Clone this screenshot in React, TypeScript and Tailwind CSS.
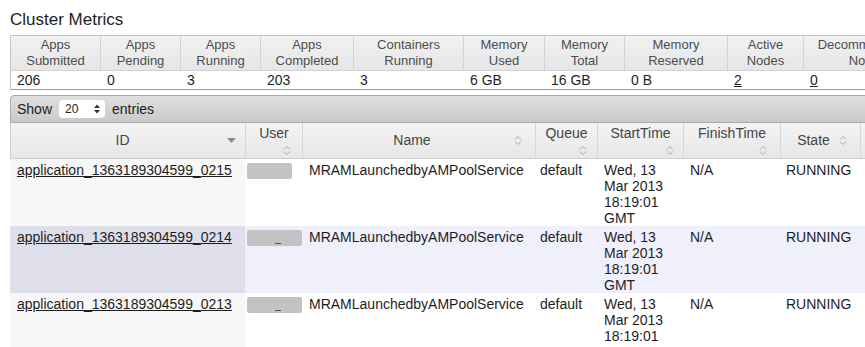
import type { ReactNode } from 'react';

const metricCols = [
  { w: 'w-[90px]', h: ['Apps', 'Submitted'], v: '206' },
  { w: 'w-[80px]', h: ['Apps', 'Pending'], v: '0' },
  { w: 'w-[80px]', h: ['Apps', 'Running'], v: '3' },
  { w: 'w-[93px]', h: ['Apps', 'Completed'], v: '203' },
  { w: 'w-[110px]', h: ['Containers', 'Running'], v: '3' },
  { w: 'w-[81px]', h: ['Memory', 'Used'], v: '6 GB' },
  { w: 'w-[80px]', h: ['Memory', 'Total'], v: '16 GB' },
  { w: 'w-[103px]', h: ['Memory', 'Reserved'], v: '0 B' },
  { w: 'w-[76px]', h: ['Active', 'Nodes'], v: '2', link: true },
  { w: 'w-[128px]', h: ['Decommissioned', 'Nodes'], v: '0', link: true },
  { w: 'w-[80px]', h: ['Lost', 'Nodes'], v: '0', link: true },
];

function SortIcon() {
  return (
    <svg width="8" height="11" viewBox="0 0 8 11" className="shrink-0">
      <path d="M1 4.5 L4 1.5 L7 4.5" fill="none" stroke="#a8a8a8" strokeWidth="1" />
      <path d="M1 6.5 L4 9.5 L7 6.5" fill="none" stroke="#a8a8a8" strokeWidth="1" />
    </svg>
  );
}

function SortedDesc() {
  return (
    <svg width="9" height="5" viewBox="0 0 9 5" className="shrink-0">
      <path d="M0 0 L9 0 L4.5 5 Z" fill="#8c8c8c" />
    </svg>
  );
}

// header with icon beside the label
function InlineHead({ label, icon, pr }: { label: string; icon: ReactNode; pr: string }) {
  return (
    <div className={`flex h-full items-center pl-[7px] ${pr}`}>
      <span className="flex-1 text-center">{label}</span>
      {icon}
    </div>
  );
}

// header where the icon wraps under the label
function StackHead({ label, pr }: { label: string; pr: string }) {
  return (
    <div className="flex h-full flex-col pt-[2px]">
      <span className="text-center leading-[17px]">{label}</span>
      <div className={`flex justify-end pt-[3px] ${pr}`}>
        <SortIcon />
      </div>
    </div>
  );
}

const appCols = [
  'w-[235px]',
  'w-[57px]',
  'w-[233px]',
  'w-[62px]',
  'w-[86px]',
  'w-[97px]',
  'w-[80px]',
  'w-[95px]',
  'w-[95px]',
];

const apps = ['0215', '0214', '0213'];

function Redacted({ wide, marks }: { wide: boolean; marks: boolean }) {
  return (
    <div className="relative mt-[4px] ml-[2px]">
      <div className={`h-[16px] ${wide ? 'w-[55px]' : 'w-[45px]'} rounded-[2px] bg-[#c3c3c3] blur-[0.6px]`} />
      {marks && (
        <div className="absolute left-[28px] top-[13px] h-[1px] w-[6px] bg-[#555]" />
      )}
    </div>
  );
}

export default function App() {
  return (
    <div className="h-[347px] w-[865px] overflow-hidden bg-white font-['Liberation_Sans',Arial,sans-serif] text-[#1e1e1e]">
      <h1 className="pl-[10px] pt-[10px] text-[17px] leading-[20px]">Cluster Metrics</h1>

      {/* Metrics table */}
      <div className="ml-[10px] mt-[5px] w-max border border-[#c4c4c4] border-b-[#9a9a9a]">
        <div className="flex border-b border-[#d2d2d2] bg-[linear-gradient(#f1f1f1,#e6e6e6)]">
          {metricCols.map((c) => (
            <div
              key={c.h.join(' ')}
              className={`${c.w} border-r border-[#d4d4d4] py-[1px] text-center text-[13px] leading-[16px] text-[#4d4d4d]`}
            >
              <div>{c.h[0]}</div>
              <div>{c.h[1]}</div>
            </div>
          ))}
        </div>
        <div className="flex">
          {metricCols.map((c) => (
            <div key={c.h.join(' ')} className={`${c.w} py-[1px] pl-[6px] text-[14px] leading-[16px]`}>
              {c.link ? <span className="underline">{c.v}</span> : c.v}
            </div>
          ))}
        </div>
      </div>

      {/* Applications table */}
      <div className="ml-[10px] mt-[5px] w-max">
        <div className="flex h-[28px] items-center rounded-t-[4px] border border-[#a9a9a9] bg-[linear-gradient(#e0e0e0,#c9c9c9)] pl-[6px] text-[14px]">
          <span>Show</span>
          <div className="ml-[7px] flex h-[18px] w-[46px] items-center justify-between rounded-[4px] bg-white pl-[6px] pr-[5px] text-[12px] text-[#222]">
            <span>20</span>
            <svg width="6" height="10" viewBox="0 0 6 10">
              <path d="M0 4 L3 0.5 L6 4 Z" fill="#333" />
              <path d="M0 6 L3 9.5 L6 6 Z" fill="#333" />
            </svg>
          </div>
          <span className="ml-[7px]">entries</span>
        </div>

        <div className="flex h-[36px] border-b border-l border-[#cfcfcf] bg-[linear-gradient(#f3f3f3,#e7e7e7)] text-[14px] text-[#444]">
          <div className={`${appCols[0]} border-r border-[#d6d6d6]`}>
            <InlineHead label="ID" icon={<SortedDesc />} pr="pr-[9px]" />
          </div>
          <div className={`${appCols[1]} border-r border-[#d6d6d6]`}>
            <StackHead label="User" pr="pr-[11px]" />
          </div>
          <div className={`${appCols[2]} border-r border-[#d6d6d6]`}>
            <InlineHead label="Name" icon={<SortIcon />} pr="pr-[13px]" />
          </div>
          <div className={`${appCols[3]} border-r border-[#d6d6d6]`}>
            <StackHead label="Queue" pr="pr-[10px]" />
          </div>
          <div className={`${appCols[4]} border-r border-[#d6d6d6]`}>
            <StackHead label="StartTime" pr="pr-[9px]" />
          </div>
          <div className={`${appCols[5]} border-r border-[#d6d6d6]`}>
            <StackHead label="FinishTime" pr="pr-[13px]" />
          </div>
          <div className={`${appCols[6]} border-r border-[#d6d6d6]`}>
            <InlineHead label="State" icon={<SortIcon />} pr="pr-[13px]" />
          </div>
          <div className={`${appCols[7]} border-r border-[#d6d6d6]`}>
            <StackHead label="FinalStatus" pr="pr-[10px]" />
          </div>
          <div className={`${appCols[8]} border-r border-[#d6d6d6]`}>
            <InlineHead label="Progress" icon={<SortIcon />} pr="pr-[10px]" />
          </div>
        </div>

        {apps.map((id, i) => {
          const even = i % 2 === 1;
          return (
            <div
              key={id}
              className={`flex text-[14px] leading-[16px] ${even ? 'bg-[#eff0fc]' : 'bg-white'}`}
            >
              <div className={`${appCols[0]} pl-[7px] pt-[3px] ${even ? 'bg-[#dedfea]' : 'bg-[#f7f7f7]'}`}>
                <span className="underline">application_1363189304599_{id}</span>
              </div>
              <div className={appCols[1]}>
                <Redacted wide={i > 0} marks={i > 0} />
              </div>
              <div className={`${appCols[2]} pl-[7px] pt-[3px]`}>MRAMLaunchedbyAMPoolService</div>
              <div className={`${appCols[3]} pl-[5px] pt-[3px]`}>default</div>
              <div className={`${appCols[4]} pb-[0px] pl-[7px] pt-[3px]`}>
                <div>Wed, 13</div>
                <div>Mar 2013</div>
                <div>18:19:01</div>
                <div>GMT</div>
              </div>
              <div className={`${appCols[5]} pl-[7px] pt-[3px]`}>N/A</div>
              <div className={`${appCols[6]} pl-[6px] pt-[3px]`}>RUNNING</div>
              <div className={`${appCols[7]} pl-[7px] pt-[3px]`}>UNDEFINED</div>
              <div className={`${appCols[8]} pl-[7px] pt-[3px]`} />
            </div>
          );
        })}
      </div>
    </div>
  );
}
